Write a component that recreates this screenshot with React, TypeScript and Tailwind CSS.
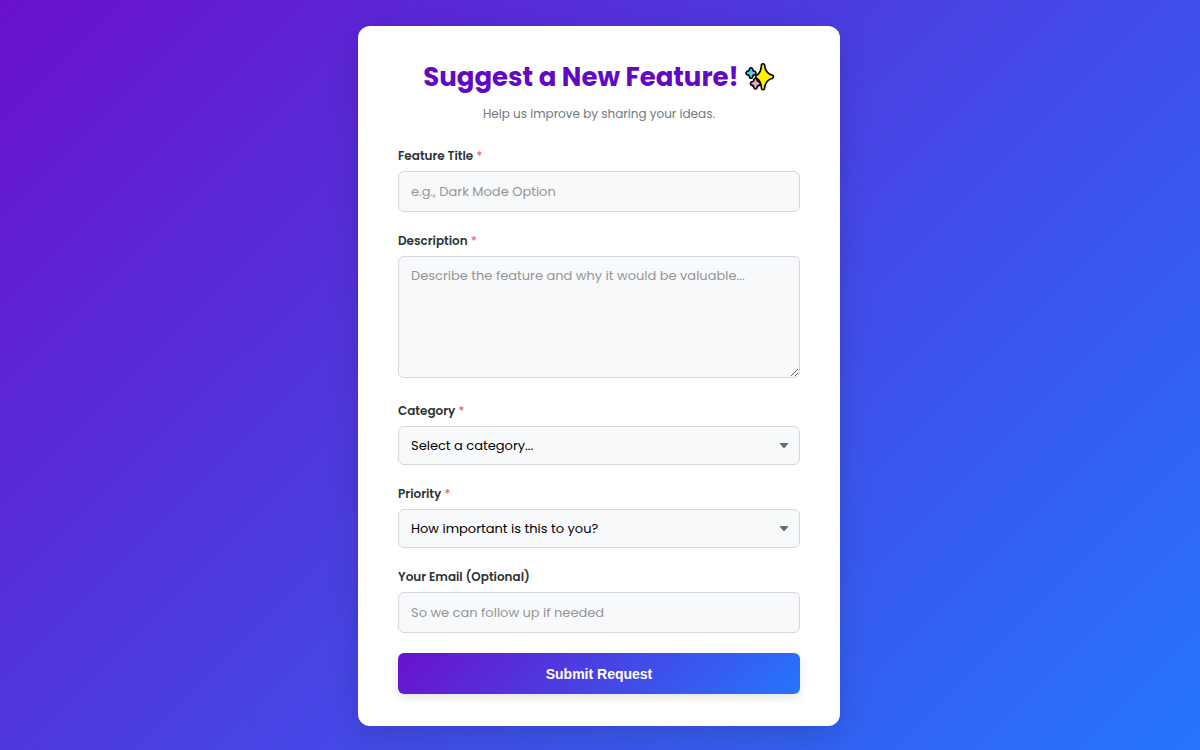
import type { FormEvent, ReactNode } from 'react';

const controlClass =
  'block w-full rounded-md border border-[#d5d9dd] bg-[#f8f9fb] px-3 text-[13px] leading-5 outline-none placeholder:text-[#959595] focus:border-[#6a11cb]';

const categories = ['User Interface', 'Performance', 'Integrations', 'Other'];
const priorities = ['Nice to have', 'Important', 'Critical'];

const smallStar =
  'M4.600 6.600Q6 4.800 7.400 6.600Q7.600 9.200 10.200 9.500Q11.900 11 10.200 12.500Q7.600 12.800 7.400 15.400Q6 17.200 4.600 15.400Q4.400 12.800 1.800 12.500Q.1 11 1.800 9.500Q4.400 9.200 4.600 6.600Z';

function SparklesIcon() {
  return (
    <svg viewBox="0 0 30 30" aria-hidden="true" className="size-[30px] shrink-0">
      <g stroke="#000" strokeWidth="1.6" strokeLinejoin="round">
        <path fill="#4fd0f5" d={smallStar} />
        <path fill="#f9a0cb" d={smallStar} transform="translate(4.5 10.600)" />
        <path
          fill="#fff100"
          d="M16.500 2.600Q18 .8 19.500 2.600Q20 11.400 27.600 13.200Q29.400 14.700 27.600 16.200Q20 18 19.500 26.800Q18 28.600 16.500 26.800Q16 18 11.500 16.200Q9.800 14.700 11.500 13.200Q16 11.400 16.500 2.600Z"
        />
      </g>
    </svg>
  );
}

function Field({
  id,
  label,
  required = false,
  children,
}: {
  id: string;
  label: string;
  required?: boolean;
  children: ReactNode;
}) {
  return (
    <div>
      <label htmlFor={id} className="mb-1 block text-xs leading-[22px] font-semibold text-[#2d3436]">
        {label}
        {required ? <span className="font-normal text-[#ff4d4d]"> *</span> : null}
      </label>
      {children}
    </div>
  );
}

function SelectField({
  id,
  label,
  placeholder,
  options,
}: {
  id: string;
  label: string;
  placeholder: string;
  options: string[];
}) {
  return (
    <Field id={id} label={label} required>
      <div className="relative">
        <select
          id={id}
          name={id}
          required
          defaultValue=""
          className={`${controlClass} h-[39px] appearance-none pr-9 text-black`}
        >
          <option value="" disabled>
            {placeholder}
          </option>
          {options.map((option) => (
            <option key={option} value={option}>
              {option}
            </option>
          ))}
        </select>
        <svg
          viewBox="0 0 8 5"
          aria-hidden="true"
          className="pointer-events-none absolute inset-y-0 right-3 my-auto h-[5px] w-2"
        >
          <path fill="#636e72" d="M0 0h8v1L4.500 5h-1L0 1Z" />
        </svg>
      </div>
    </Field>
  );
}

export default function App() {
  const handleSubmit = (event: FormEvent<HTMLFormElement>) => {
    event.preventDefault();
  };

  return (
    <main className="flex min-h-screen items-center justify-center bg-[linear-gradient(135deg,#6a11cb_0%,#2575fc_100%)] pt-[26px] pr-[22px] pb-6 pl-5 font-[Poppins,Inter,sans-serif]">
      <section className="w-full max-w-[482px] rounded-xl bg-white px-10 py-8 shadow-[0_8px_30px_rgba(0,0,0,0.15)]">
        <header className="mb-[21px] text-center">
          <h1 className="flex items-center justify-center gap-1.5 text-[26px] leading-[38px] font-bold text-[#6309c6]">
            Suggest a New Feature!
            <SparklesIcon />
          </h1>
          <p className="mt-2 text-xs leading-5 text-[#707a7e]">
            Help us improve by sharing your ideas.
          </p>
        </header>

        <form onSubmit={handleSubmit}>
          <div className="flex flex-col gap-[18px]">
            <Field id="title" label="Feature Title" required>
              <input
                id="title"
                name="title"
                type="text"
                required
                placeholder="e.g., Dark Mode Option"
                className={`${controlClass} h-[41px]`}
              />
            </Field>

            <Field id="description" label="Description" required>
              <textarea
                id="description"
                name="description"
                required
                placeholder="Describe the feature and why it would be valuable..."
                className={`${controlClass} mb-1 h-[122px] resize-y py-[9px]`}
              />
            </Field>

            <SelectField
              id="category"
              label="Category"
              placeholder="Select a category..."
              options={categories}
            />
            <SelectField
              id="priority"
              label="Priority"
              placeholder="How important is this to you?"
              options={priorities}
            />

            <Field id="email" label="Your Email (Optional)">
              <input
                id="email"
                name="email"
                type="email"
                placeholder="So we can follow up if needed"
                className={`${controlClass} h-[41px]`}
              />
            </Field>
          </div>

          <button
            type="submit"
            className="mt-5 h-[41px] w-full rounded-md bg-[linear-gradient(135deg,#6a11cb_0%,#2575fc_100%)] font-['Liberation_Sans',Arial,sans-serif] text-sm font-bold text-white shadow-[0_4px_10px_rgba(0,0,0,0.1)]"
          >
            Submit Request
          </button>
        </form>
      </section>
    </main>
  );
}
